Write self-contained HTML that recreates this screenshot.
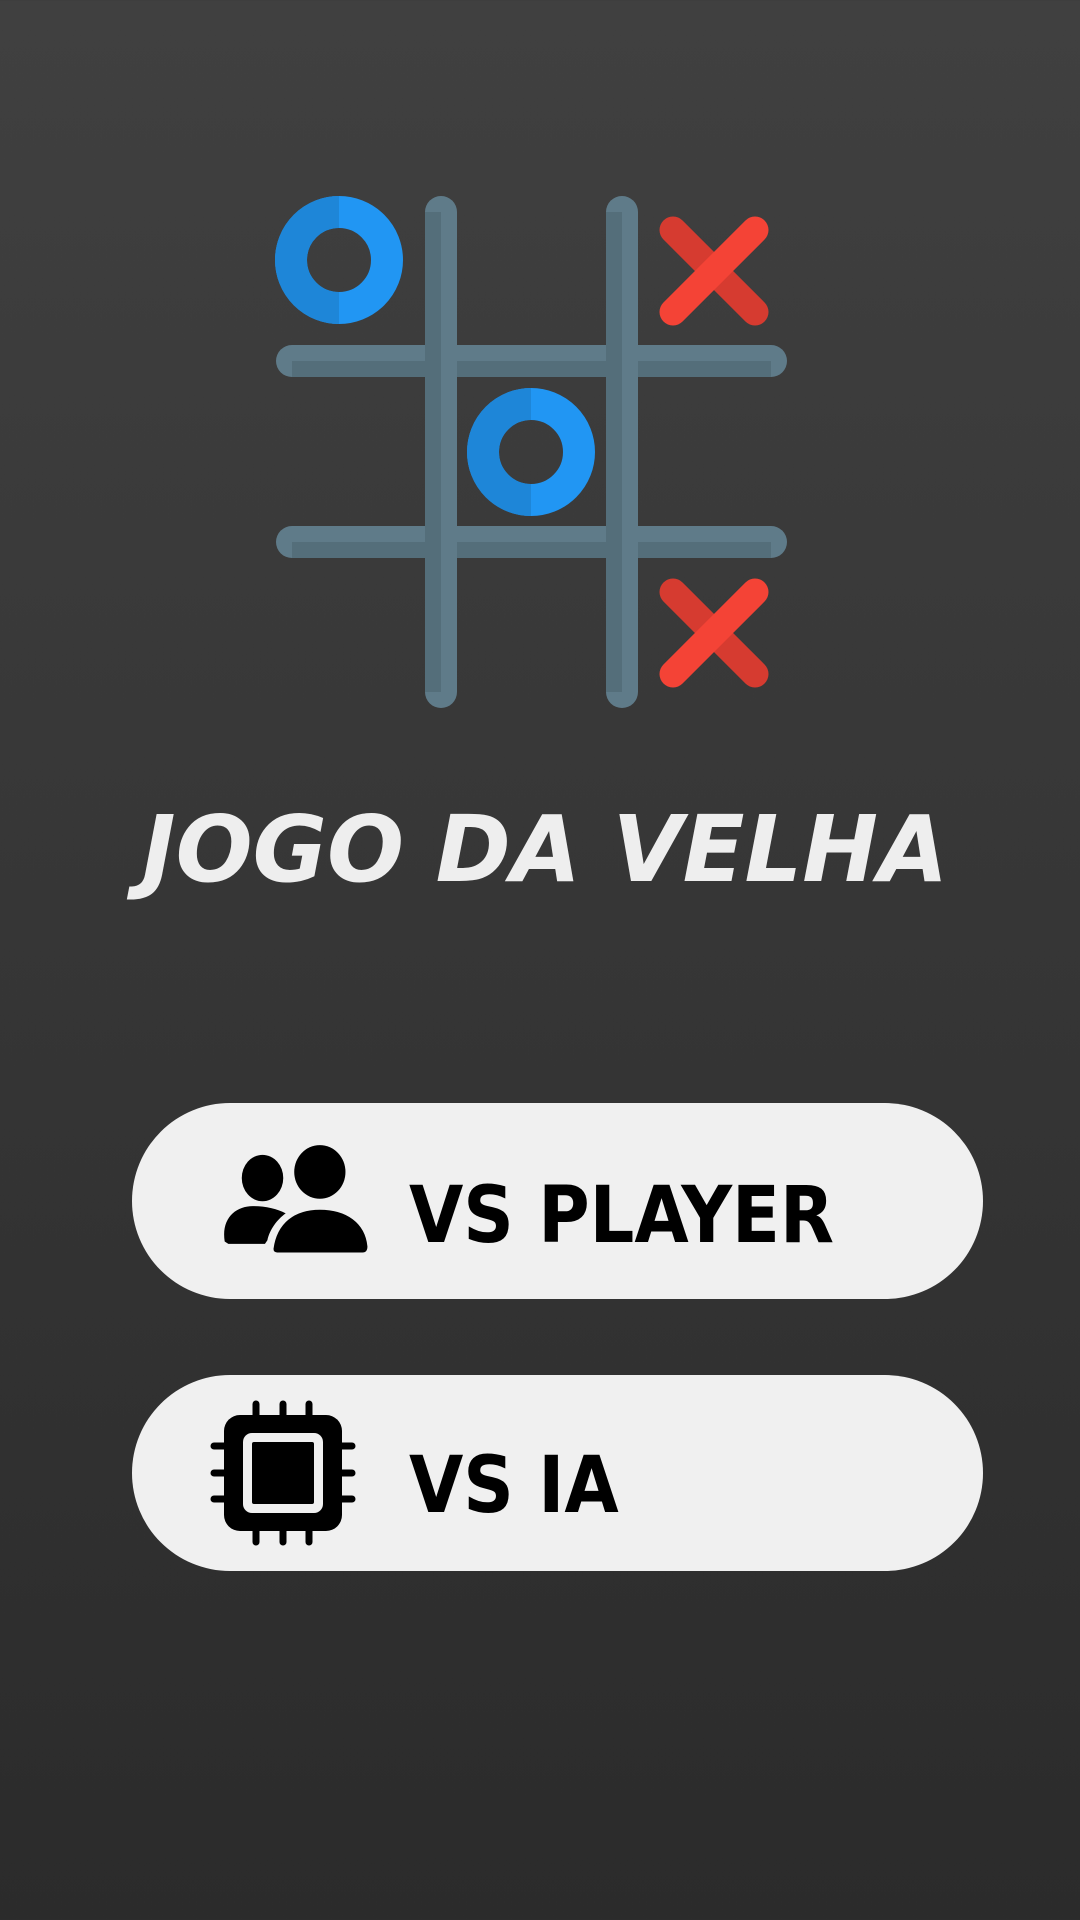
<!DOCTYPE html>
<html><head><meta charset="utf-8"><style>
html,body{margin:0;padding:0}
body{width:1080px;height:1920px;background:linear-gradient(#404040,#2b2b2b);position:relative;overflow:hidden;font-family:"DejaVu Sans","Liberation Sans",sans-serif}
.title{position:absolute;left:0;width:1090px;top:795px;text-align:center;font-size:92px;font-weight:bold;font-style:italic;color:#eeeeee;line-height:110px;transform:scaleX(0.985);transform-origin:548px 0}
.btn{position:absolute;left:132px;width:851px;height:196px;border-radius:98px;background:#f0f0f0}
.lbl{position:absolute;left:277px;font-family:"DejaVu Sans Condensed","DejaVu Sans",sans-serif;font-size:78px;font-weight:bold;color:#000;line-height:1}
svg{position:absolute}
</style></head><body>
<svg width="1080" height="760" style="left:0;top:0">
 <g stroke-linecap="round" stroke-width="32">
  <line x1="292" y1="361" x2="771" y2="361" stroke="#5f7b89"/>
  <line x1="292" y1="542" x2="771" y2="542" stroke="#5f7b89"/>
 </g>
 <g stroke-width="16">
  <line x1="292" y1="369" x2="771" y2="369" stroke="#546e7a"/>
  <line x1="292" y1="550" x2="771" y2="550" stroke="#546e7a"/>
 </g>
 <g stroke-linecap="round" stroke-width="32">
  <line x1="441" y1="212" x2="441" y2="692" stroke="#5f7b89"/>
  <line x1="622" y1="212" x2="622" y2="692" stroke="#5f7b89"/>
 </g>
 <g stroke-width="16">
  <line x1="433" y1="212" x2="433" y2="692" stroke="#546e7a"/>
  <line x1="614" y1="212" x2="614" y2="692" stroke="#546e7a"/>
 </g>
 <g fill="none" stroke-width="32">
  <circle cx="339" cy="260" r="48" stroke="#2196f3"/>
  <path d="M339 212 A48 48 0 0 0 339 308" stroke="#1e86d8"/>
  <circle cx="531" cy="452" r="48" stroke="#2196f3"/>
  <path d="M531 404 A48 48 0 0 0 531 500" stroke="#1e86d8"/>
 </g>
 <g stroke-linecap="round" stroke-width="27">
  <line x1="673" y1="230" x2="755" y2="312" stroke="#d63b30"/>
  <line x1="755" y1="230" x2="673" y2="312" stroke="#f44336"/>
  <line x1="673" y1="592" x2="755" y2="674" stroke="#d63b30"/>
  <line x1="755" y1="592" x2="673" y2="674" stroke="#f44336"/>
 </g>
</svg>
<div class="title">JOGO DA VELHA</div>
<div class="btn" style="top:1103px">
 <div class="lbl" style="top:74px">VS PLAYER</div>
</div>
<svg width="153" height="122" viewBox="181 930 125 100" style="left:222px;top:1139px">
 <ellipse cx="214" cy="962" rx="17" ry="19" fill="#000"/>
 <ellipse cx="261" cy="957" rx="21" ry="22" fill="#000"/>
 <path d="M183 1014 C180 995 192 985 206 985 C216 985 226 987 233 991 C226 996 220 1004 218 1013 L216 1016 L186 1016 Z" fill="#000"/>
 <path d="M222 1020 C225 998 240 987 261 987 C283 987 299 998 301 1018 C301 1022 299 1024 296 1024 L226 1024 C223 1024 222 1022 222 1020 Z" fill="#000" stroke="#f0f0f0" stroke-width="2"/>
</svg>
<div class="btn" style="top:1375px">
 <svg width="146" height="146" style="left:78px;top:25px" viewBox="0 0 146 146">
  <g stroke="#000" stroke-width="7" stroke-linecap="round">
   <line x1="46" y1="4" x2="46" y2="20"/><line x1="73" y1="4" x2="73" y2="20"/><line x1="99" y1="4" x2="99" y2="20"/>
   <line x1="46" y1="126" x2="46" y2="142"/><line x1="73" y1="126" x2="73" y2="142"/><line x1="99" y1="126" x2="99" y2="142"/>
   <line x1="4" y1="46" x2="20" y2="46"/><line x1="4" y1="73" x2="20" y2="73"/><line x1="4" y1="99" x2="20" y2="99"/>
   <line x1="126" y1="46" x2="142" y2="46"/><line x1="126" y1="73" x2="142" y2="73"/><line x1="126" y1="99" x2="142" y2="99"/>
  </g>
  <rect x="14" y="15" width="118" height="116" rx="16" fill="#000"/>
  <rect x="33" y="33" width="80" height="80" rx="9" fill="#f0f0f0"/>
  <rect x="42" y="42" width="62" height="62" rx="2" fill="#000"/>
 </svg>
 <div class="lbl" style="top:72px">VS IA</div>
</div>
</body></html>
